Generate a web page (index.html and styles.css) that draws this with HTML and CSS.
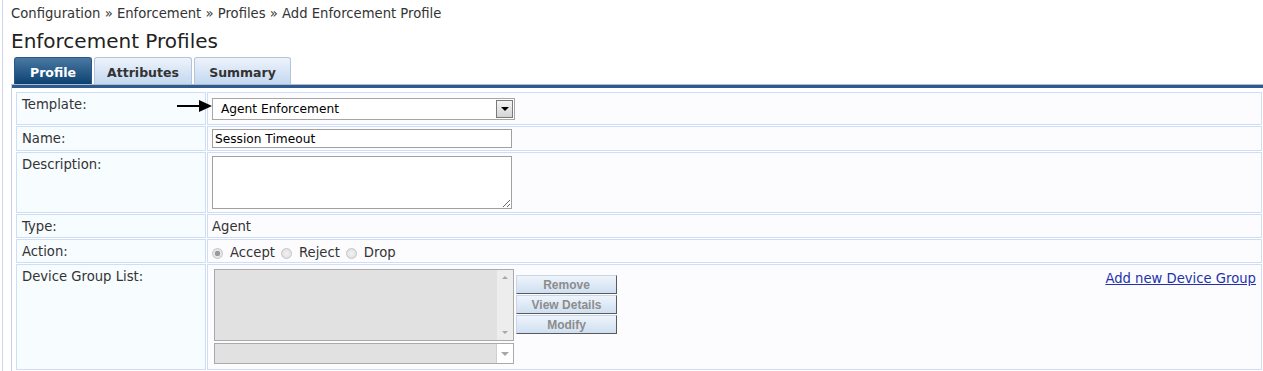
FILE: index.html
```html
<!DOCTYPE html>
<html lang="en">
<head>
    <meta charset="UTF-8">
    <title>Add Enforcement Profile</title>
    <link rel="stylesheet" href="styles.css">
</head>
<body>
    <div class="page">
        <div class="breadcrumb">Configuration &raquo; Enforcement &raquo; Profiles &raquo; Add Enforcement Profile</div>
        <h1 class="page-title">Enforcement Profiles</h1>

        <div class="tabs">
            <div class="tab tab-active">Profile</div>
            <div class="tab tab-attr">Attributes</div>
            <div class="tab">Summary</div>
        </div>

        <div class="tab-panel">
            <table class="form-table">
                <tr class="row-template">
                    <td class="label">Template:</td>
                    <td class="value">
                        <svg class="pointer" width="36" height="14" viewBox="0 0 36 14">
                            <line x1="0" y1="7" x2="24" y2="7" stroke="#000" stroke-width="2"/>
                            <polygon points="22,1 35,7 22,13" fill="#000"/>
                        </svg>
                        <div class="select-box">
                            <span class="select-text">Agent Enforcement</span>
                            <span class="select-btn"><span class="tri"></span></span>
                        </div>
                    </td>
                </tr>
                <tr class="row-name">
                    <td class="label">Name:</td>
                    <td class="value"><input class="text-input" type="text" value="Session Timeout"></td>
                </tr>
                <tr class="row-desc">
                    <td class="label">Description:</td>
                    <td class="value"><textarea class="text-area"></textarea></td>
                </tr>
                <tr class="row-type">
                    <td class="label">Type:</td>
                    <td class="value">Agent</td>
                </tr>
                <tr class="row-action">
                    <td class="label">Action:</td>
                    <td class="value">
                        <div class="radios">
                            <span class="radio checked"></span><span class="radio-label">Accept</span>
                            <span class="radio"></span><span class="radio-label">Reject</span>
                            <span class="radio"></span><span class="radio-label">Drop</span>
                        </div>
                    </td>
                </tr>
                <tr class="row-devices">
                    <td class="label">Device Group List:</td>
                    <td class="value">
                        <div class="device-area">
                            <div class="device-lists">
                                <div class="listbox">
                                    <div class="listbox-scroll">
                                        <span class="scroll-up"></span>
                                        <span class="scroll-down"></span>
                                    </div>
                                </div>
                                <div class="disabled-select">
                                    <span class="disabled-btn"><span class="tri-grey"></span></span>
                                </div>
                            </div>
                            <div class="device-buttons">
                                <button class="grey-btn">Remove</button>
                                <button class="grey-btn">View Details</button>
                                <button class="grey-btn">Modify</button>
                            </div>
                            <a class="add-link" href="#">Add new Device Group</a>
                        </div>
                    </td>
                </tr>
            </table>
        </div>
    </div>
</body>
</html>
```

FILE: styles.css
```css
body {
    margin: 0;
    background-color: #ffffff;
    font-family: "DejaVu Sans", Verdana, sans-serif;
    font-size: 13.2px;
    color: #333333;
}

.page {
    margin-left: 2px;
    border-left: 1px solid #c9d5ea;
    padding-left: 8px;
    height: 371px;
    box-sizing: border-box;
}

.breadcrumb {
    padding-top: 6px;
    line-height: 16px;
    color: #333333;
}

.page-title {
    margin: 0;
    padding-top: 7px;
    font-size: 20px;
    font-weight: normal;
    line-height: 24px;
    color: #222222;
}

/* tabs */
.tabs {
    display: flex;
    gap: 2px;
    margin-top: 4px;
    padding-left: 3px;
    height: 27px;
}

.tab {
    width: 97px;
    box-sizing: border-box;
    border: 1px solid #b4c3de;
    border-bottom: none;
    border-radius: 3px 3px 0 0;
    background: linear-gradient(#eef3fb, #c3d8f0);
    font-size: 12.5px;
    font-weight: bold;
    color: #333333;
    text-align: center;
    line-height: 29px;
}

.tab-attr {
    width: 98px;
}

.tab-active {
    width: 78px;
    border-color: #2b5788;
    background: linear-gradient(#4a78a3, #0c4271);
    color: #ffffff;
}

.tab-panel {
    border-top: 1px solid #b8b8b8;
    border-left: 1px solid #c1d1ea;
    box-shadow: inset 0 3px 0 #2b5b94;
    padding: 6px 0 0 3px;
}

/* form table */
.form-table {
    border-spacing: 1px;
    width: 1248px;
}

.form-table td {
    box-sizing: border-box;
    border: 1px solid #cfdef6;
    vertical-align: top;
    padding: 4px 5px 0 5px;
    line-height: 16px;
}

.form-table td.label {
    width: 190px;
    background-color: #f7fcff;
}

.form-table td.value {
    padding-left: 4px;
    background-color: #fcfcff;
    position: relative;
}

.row-template td { height: 33px; }
.row-name td { height: 25px; }
.row-desc td { height: 61px; }
.row-type td { height: 24px; }
.row-action td { height: 24px; }
.row-devices td { height: 106px; }

.row-template td.value,
.row-name td.value,
.row-desc td.value,
.row-devices td.value {
    padding-top: 3px;
}

/* template select */
.pointer {
    position: absolute;
    left: -31px;
    top: 6px;
}

.select-box {
    display: flex;
    align-items: center;
    width: 303px;
    height: 22px;
    margin-top: 2px;
    box-sizing: border-box;
    border: 1px solid #a6a6a6;
    background-color: #ffffff;
    color: #000000;
}

.select-text {
    flex: 1;
    padding-left: 8px;
    font-size: 12.2px;
}

.select-btn {
    display: flex;
    align-items: center;
    justify-content: center;
    width: 17px;
    height: 18px;
    margin-right: 1px;
    box-sizing: border-box;
    border: 1px solid #7a7a7a;
    background: linear-gradient(#f4f4f4, #d4d4d4);
}

.tri {
    width: 0;
    height: 0;
    border-left: 4px solid transparent;
    border-right: 4px solid transparent;
    border-top: 4px solid #000000;
}

.text-input {
    display: block;
    width: 300px;
    height: 19px;
    margin: -1px 0 0 0;
    box-sizing: border-box;
    border: 1px solid #a0a0a0;
    padding: 0 2px;
    font-family: "DejaVu Sans", Verdana, sans-serif;
    font-size: 12.2px;
    color: #000000;
}

.text-area {
    display: block;
    width: 300px;
    height: 53px;
    margin: 0;
    box-sizing: border-box;
    border: 1px solid #a0a0a0;
    resize: both;
}

/* radios */
.radios {
    display: flex;
    align-items: center;
    margin-top: 1px;
}

.radio {
    width: 11px;
    height: 11px;
    box-sizing: border-box;
    border: 1px solid #c4c4c4;
    border-radius: 50%;
    background: radial-gradient(#f2f2f2, #dcdcdc);
    margin-right: 7px;
}

.radio.checked {
    background: radial-gradient(circle, #9a9a9a 0 2.5px, #e6e6e6 3px);
}

.radio-label {
    margin-right: 6px;
}

/* device group list */
.device-area {
    display: flex;
    align-items: flex-start;
}

.device-lists {
    margin: 1px 0 0 2px;
}

.listbox {
    display: flex;
    justify-content: flex-end;
    width: 300px;
    height: 72px;
    box-sizing: border-box;
    border: 1px solid #aaaaaa;
    background-color: #e1e1e1;
}

.listbox-scroll {
    display: flex;
    flex-direction: column;
    justify-content: space-between;
    align-items: center;
    width: 16px;
    padding: 6px 0;
    background-color: #ededed;
}

.scroll-up, .scroll-down {
    width: 0;
    height: 0;
    border-left: 3px solid transparent;
    border-right: 3px solid transparent;
}

.scroll-up { border-bottom: 3px solid #a8a8a8; }
.scroll-down { border-top: 3px solid #a8a8a8; }

.disabled-select {
    display: flex;
    justify-content: flex-end;
    width: 300px;
    height: 21px;
    margin-top: 2px;
    box-sizing: border-box;
    border: 1px solid #aaaaaa;
    background-color: #e1e1e1;
}

.disabled-btn {
    display: flex;
    align-items: center;
    justify-content: center;
    width: 16px;
    border-left: 1px solid #d0d0d0;
    background-color: #ffffff;
}

.tri-grey {
    width: 0;
    height: 0;
    border-left: 4px solid transparent;
    border-right: 4px solid transparent;
    border-top: 4px solid #a8a8a8;
}

.device-buttons {
    display: flex;
    flex-direction: column;
    gap: 1px;
    margin: 7px 0 0 2px;
}

.grey-btn {
    width: 101px;
    height: 19px;
    margin: 0;
    padding: 0;
    box-sizing: border-box;
    border: 1px solid #c8d6e8;
    border-right-color: #5a5a5a;
    border-bottom-color: #5a5a5a;
    background: linear-gradient(#eef4fb, #cfdff1);
    font-family: "Liberation Sans", Arial, sans-serif;
    font-size: 12px;
    font-weight: bold;
    color: #8c8c8c;
}

.add-link {
    margin-left: auto;
    margin-top: 3px;
    color: #2233aa;
    text-decoration: underline;
}
```
